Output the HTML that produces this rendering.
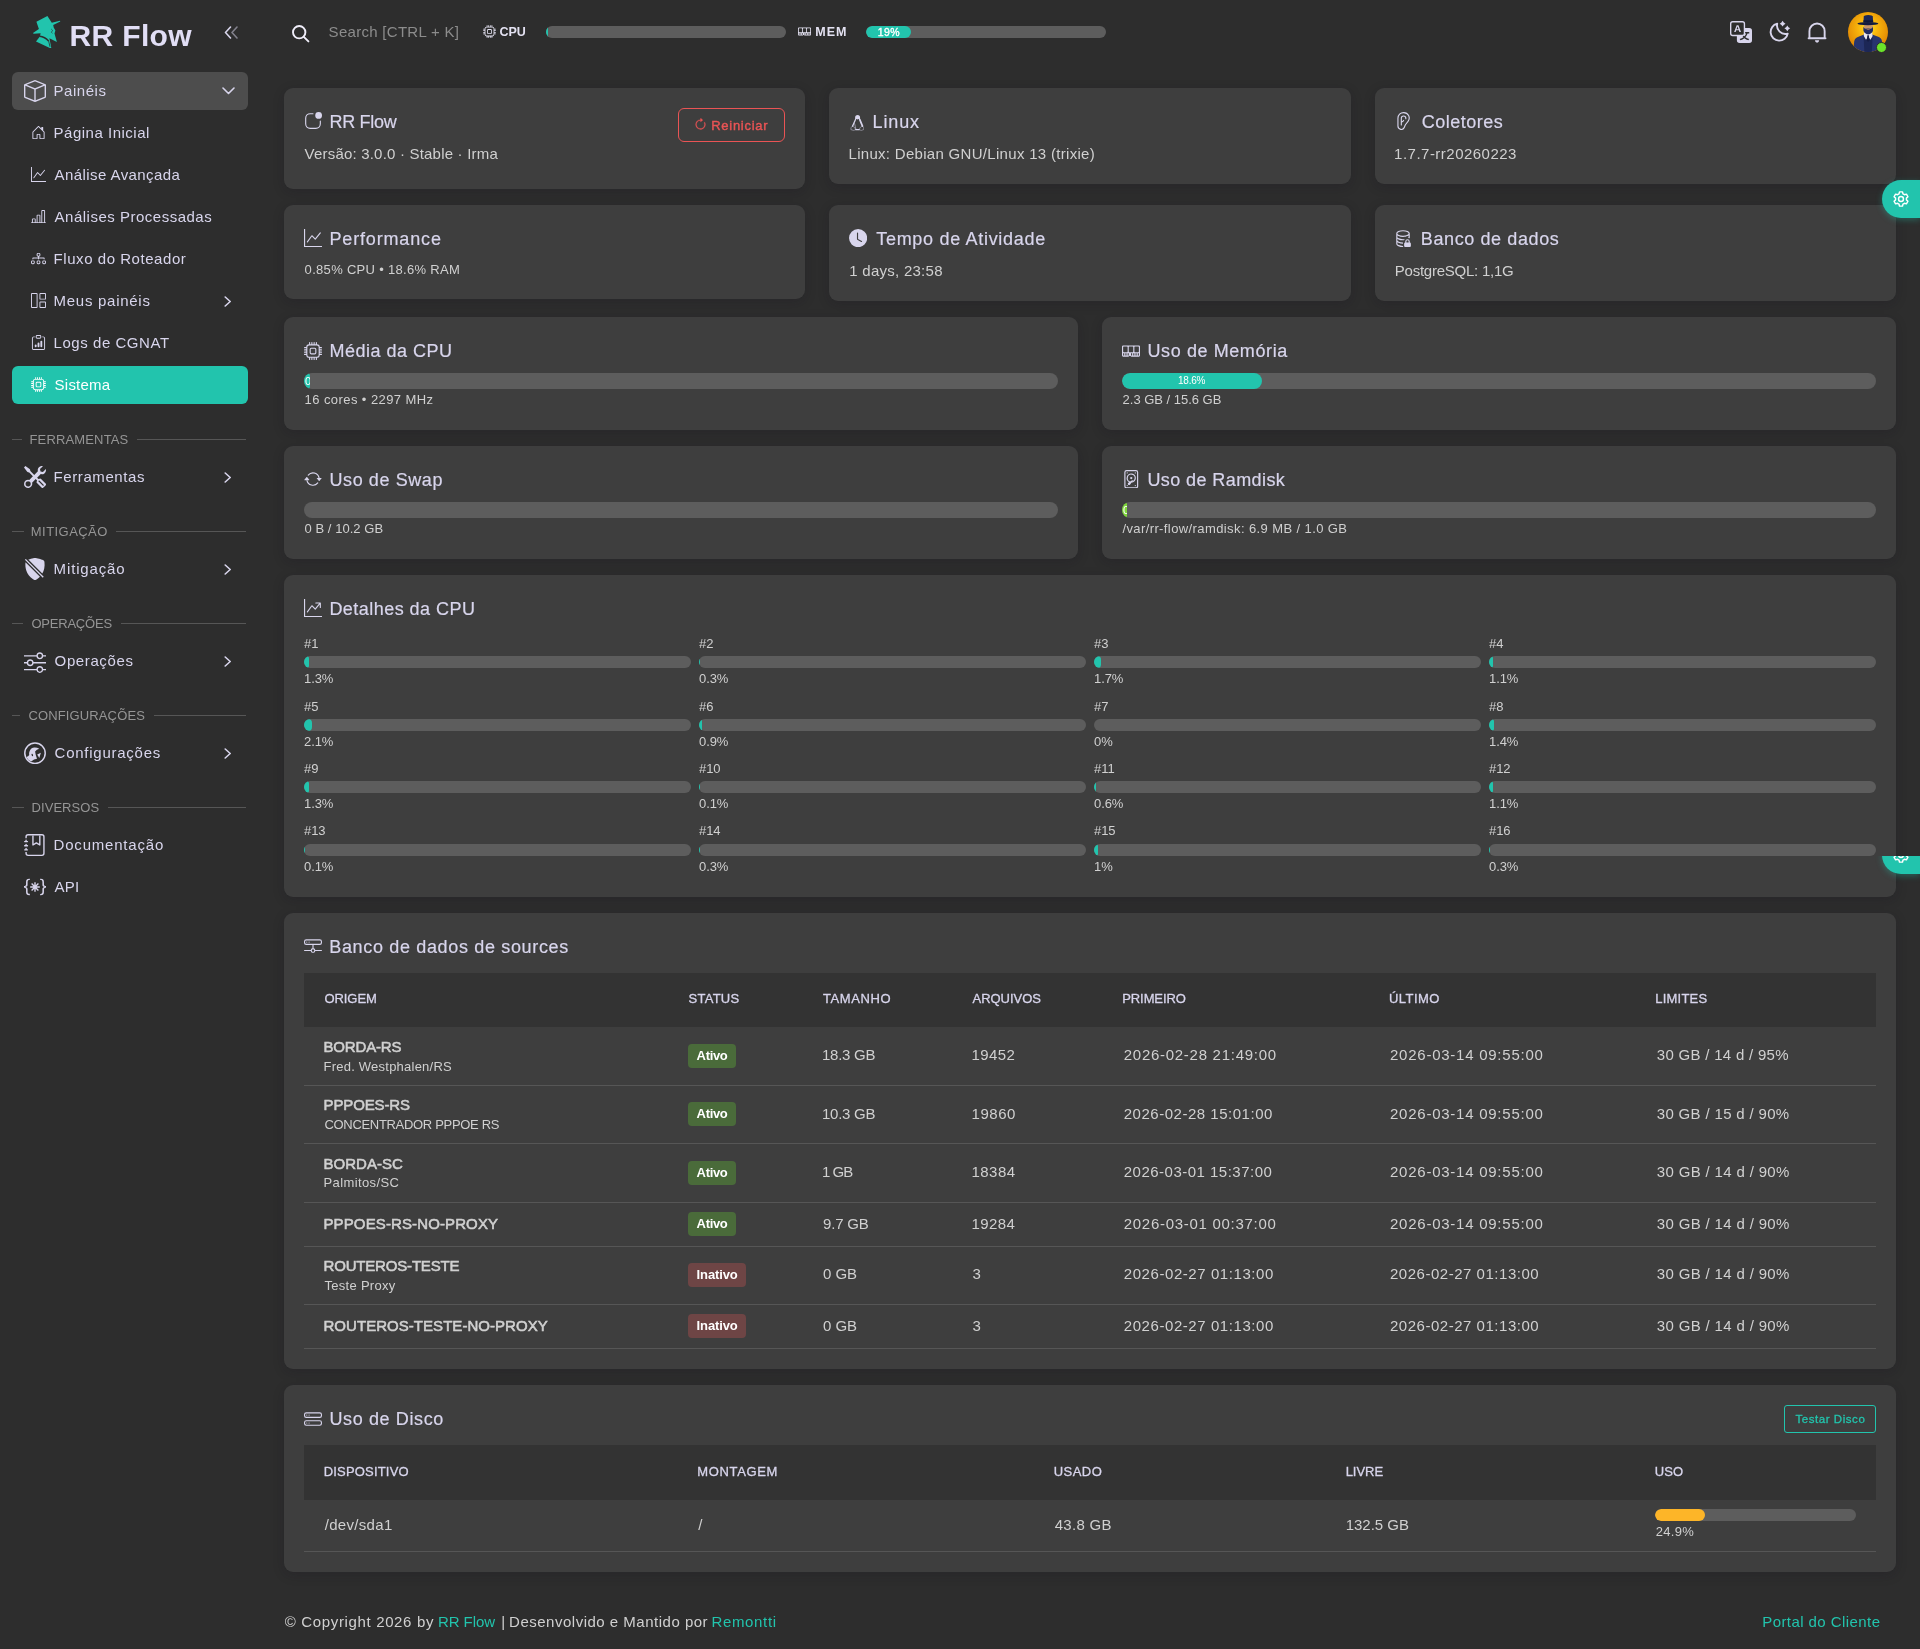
<!DOCTYPE html>
<html lang="pt-BR"><head><meta charset="utf-8"><title>RR Flow - Sistema</title><style>*{box-sizing:border-box}html,body{margin:0;padding:0}
body{width:1920px;height:1649px;background:#2d2d2d;font-family:"Liberation Sans",sans-serif;position:relative;overflow:hidden}
#root{position:absolute;left:0;top:0;width:1920px;height:1649px;will-change:transform}
.t{position:absolute;white-space:pre;line-height:1;display:block}
.b{position:absolute;display:block}
.card{position:absolute;background:#3e3e3e;border-radius:9px;box-shadow:0 3px 12px rgba(19,17,32,.2)}</style></head><body><div id="root">
<svg class="b" style="left:291px;top:24px;" width="19" height="19" viewBox="0 0 19 19" fill="none"><circle cx="8.2" cy="8.2" r="6.2" stroke="#f0eefa" stroke-width="1.9"></circle><path d="M12.8 12.8 L17.4 17.4" stroke="#f0eefa" stroke-width="1.9" stroke-linecap="round"></path></svg>
<span class="t" style="font-size: 15px; color: rgb(140, 140, 140); letter-spacing: 0.292px; left: 328.6px; top: 24.3px;">Search [CTRL + K]</span>
<svg class="b" style="left:482.5px;top:25.3px;" width="13" height="13" viewBox="0 0 16 16" fill="#e4e2f2"><path fill-rule="evenodd" clip-rule="evenodd" d="M5 0a.5.5 0 0 1 .5.5V2h1V.5a.5.5 0 0 1 1 0V2h1V.5a.5.5 0 0 1 1 0V2h1V.5a.5.5 0 0 1 1 0V2A2.5 2.5 0 0 1 14 4.5h1.5a.5.5 0 0 1 0 1H14v1h1.5a.5.5 0 0 1 0 1H14v1h1.5a.5.5 0 0 1 0 1H14v1h1.5a.5.5 0 0 1 0 1H14a2.5 2.5 0 0 1-2.5 2.5v1.5a.5.5 0 0 1-1 0V14h-1v1.5a.5.5 0 0 1-1 0V14h-1v1.5a.5.5 0 0 1-1 0V14h-1v1.5a.5.5 0 0 1-1 0V14A2.5 2.5 0 0 1 2 11.5H.5a.5.5 0 0 1 0-1H2v-1H.5a.5.5 0 0 1 0-1H2v-1H.5a.5.5 0 0 1 0-1H2v-1H.5a.5.5 0 0 1 0-1H2A2.5 2.5 0 0 1 4.5 2V.5A.5.5 0 0 1 5 0m-.5 3A1.5 1.5 0 0 0 3 4.5v7A1.5 1.5 0 0 0 4.5 13h7a1.5 1.5 0 0 0 1.5-1.5v-7A1.5 1.5 0 0 0 11.5 3zM5 6.5A1.5 1.5 0 0 1 6.5 5h3A1.5 1.5 0 0 1 11 6.5v3A1.5 1.5 0 0 1 9.5 11h-3A1.5 1.5 0 0 1 5 9.5zM6.5 6a.5.5 0 0 0-.5.5v3a.5.5 0 0 0 .5.5h3a.5.5 0 0 0 .5-.5v-3a.5.5 0 0 0-.5-.5z"></path></svg>
<span class="t" style="font-size: 12.5px; color: rgb(228, 226, 242); font-weight: 700; letter-spacing: -0.032px; left: 499.4px; top: 26.3px;">CPU</span>
<div class="b" style="left:546px;top:26px;width:240px;height:12px;background:#5d5d5d;border-radius:6.0px;overflow:hidden"><div style="width:2.04px;height:12px;background:#22c4ad;border-radius:6.0px"></div></div>
<svg class="b" style="left:798px;top:25.3px;" width="13" height="13" viewBox="0 0 16 16" fill="#e4e2f2"><path fill-rule="evenodd" clip-rule="evenodd" d="M1 3a1 1 0 0 0-1 1v8a1 1 0 0 0 1 1h4.586a1 1 0 0 0 .707-.293l.353-.353a.5.5 0 0 1 .708 0l.353.353a1 1 0 0 0 .707.293H15a1 1 0 0 0 1-1V4a1 1 0 0 0-1-1zm.5 1h3a.5.5 0 0 1 .5.5v4a.5.5 0 0 1-.5.5h-3a.5.5 0 0 1-.5-.5v-4a.5.5 0 0 1 .5-.5m5 0h3a.5.5 0 0 1 .5.5v4a.5.5 0 0 1-.5.5h-3a.5.5 0 0 1-.5-.5v-4a.5.5 0 0 1 .5-.5m4.5.5a.5.5 0 0 1 .5-.5h3a.5.5 0 0 1 .5.5v4a.5.5 0 0 1-.5.5h-3a.5.5 0 0 1-.5-.5zM2 10v2H1v-2zm2 0v2H3v-2zm2 0v2H5v-2zm3 0v2H8v-2zm2 0v2h-1v-2zm2 0v2h-1v-2zm2 0v2h-1v-2z"></path></svg>
<span class="t" style="font-size: 12.5px; color: rgb(228, 226, 242); font-weight: 700; letter-spacing: 0.925px; left: 815.3px; top: 26.3px;">MEM</span>
<div class="b" style="left:866px;top:26px;width:240px;height:12px;background:#5d5d5d;border-radius:6.0px;overflow:hidden"><div style="width:45.12px;height:12px;background:#22c4ad;border-radius:6.0px"></div></div>
<span class="t" style="font-size: 10.5px; color: rgb(255, 255, 255); -webkit-text-stroke: 0.35px rgb(255, 255, 255); letter-spacing: 0.41px; left: 877.65px; top: 26.8px;">19%</span>
<svg class="b" style="left:1730px;top:21px;" width="22" height="22" viewBox="0 0 16 16" fill="#d8d5ec"><path fill-rule="evenodd" clip-rule="evenodd" d="M4.545 6.714 4.11 8H3l1.862-5h1.284L8 8H6.833l-.435-1.286zm1.634-.736L5.500 3.956h-.049l-.679 2.022z"></path><path fill-rule="evenodd" clip-rule="evenodd" d="M0 2a2 2 0 0 1 2-2h7a2 2 0 0 1 2 2v3h3a2 2 0 0 1 2 2v7a2 2 0 0 1-2 2H7a2 2 0 0 1-2-2v-3H2a2 2 0 0 1-2-2zm2-1a1 1 0 0 0-1 1v7a1 1 0 0 0 1 1h7a1 1 0 0 0 1-1V2a1 1 0 0 0-1-1zm7.138 9.995q.289.451.630.846c-.748.575-1.673 1.001-2.768 1.292.178.217.451.635.555.867 1.125-.359 2.080-.844 2.886-1.494.777.665 1.739 1.165 2.930 1.472.133-.254.414-.673.629-.890-1.125-.253-2.057-.694-2.820-1.284.681-.747 1.222-1.651 1.621-2.757H14V8h-3v1.047h.765c-.318.844-.740 1.546-1.272 2.130a6 6 0 0 1-.415-.492 2 2 0 0 1-.940.310"></path></svg>
<svg class="b" style="left:1768px;top:20px;" width="24" height="24" viewBox="0 0 24 24" fill="none"><path d="M9.2 3.7 A8.6 8.6 0 1 0 19.7 13.6 A8.4 8.4 0 0 1 9.2 3.7 Z" stroke="#d8d5ec" stroke-width="1.9" stroke-linejoin="round"></path><path d="M14.6 0.8000000000000003 Q15.47 2.83 17.5 3.7 Q15.47 4.57 14.6 6.6 Q13.73 4.57 11.7 3.7 Q13.73 2.83 14.6 0.8000000000000003Z M19.3 5.4 Q20.17 7.43 22.2 8.3 Q20.17 9.17 19.3 11.200000000000001 Q18.43 9.17 16.400000000000002 8.3 Q18.43 7.43 19.3 5.4Z" fill="#d8d5ec"></path></svg>
<svg class="b" style="left:1806px;top:20px;" width="24" height="24" viewBox="0 0 24 24" fill="none"><path d="M2.6 18.2 H19.5 M3.45 18.2 V11.15 A7.6 7.6 0 0 1 18.65 11.15 V18.2" stroke="#d8d5ec" stroke-width="1.9" stroke-linecap="round"></path><path d="M8.9 20.3 H13.2 Q13 22.7 11.05 22.7 Q9.1 22.7 8.9 20.3Z" fill="#d8d5ec"></path></svg>
<svg class="b" style="left:1848px;top:12px;" width="40" height="40" viewBox="0 0 40 40" fill="none"><defs><radialGradient id="avg" cx="50%" cy="40%" r="55%"><stop offset="0" stop-color="#ffe326"></stop><stop offset="0.45" stop-color="#f8b40c"></stop><stop offset="1" stop-color="#e28a04"></stop></radialGradient><clipPath id="avc"><circle cx="20" cy="20" r="20"></circle></clipPath></defs>
<g clip-path="url(#avc)"><rect width="40" height="40" fill="url(#avg)"></rect>
<path d="M5.2 40 L6.2 29.5 Q6.8 26 10.5 24.8 L16.6 22.2 L20 24 L23.6 22.2 L30.2 24.8 Q33.6 26 34 29.5 L35 40 Z" fill="#27356f"></path>
<path d="M15.6 25.5 L16.4 40 L23.8 40 L24.6 25.5 Z" fill="#1c2756"></path>
<path d="M16 20.2 L24.2 20.2 L24.6 24 L22.4 27.8 L20.2 24.6 L18 27.8 L15.8 24 Z" fill="#e9e7ee"></path>
<path d="M19.3 23.2 L20.9 23.2 L21.4 28.6 L20.1 30 L18.8 28.6 Z" fill="#151d44"></path>
<rect x="16" y="11.4" width="8.8" height="6.2" rx="2.4" fill="#c99669"></rect>
<path d="M15.3 14.6 Q15.6 16.4 17.6 16.8 Q20.2 16 22.8 16.8 Q24.6 16.4 25 14.6 L25 18.4 Q24.2 21.6 20.2 22.4 Q16.2 21.6 15.4 18.4 Z" fill="#222e66"></path>
<path d="M18.2 17.2 Q20.2 16.6 22.2 17.2 Q20.2 18.4 18.2 17.2 Z" fill="#b4805a"></path>
<ellipse cx="19.9" cy="11.6" rx="10.5" ry="1.7" fill="#131b3e"></ellipse>
<path d="M15.4 10.6 L15.8 4.6 Q16 3.2 20.2 3.1 Q24.6 3.2 24.8 4.6 L25.2 10.6 Z" fill="#1d2859"></path>
<path d="M15.5 8.2 L25.1 8.2 L25.2 10.4 L15.4 10.4 Z" fill="#111839"></path>
</g></svg>
<div class="b" style="left:1875.5px;top:42.4px;width:11px;height:11px;border-radius:50%;background:#6be42a;border:1.4px solid #2d2d2d"></div>
<svg class="b" style="left:28px;top:12px;" width="40" height="40" viewBox="0 0 40 40" fill="none"><path d="M8.4 9.7 L19.4 4 L23.8 10.7 L32 8.7 L32.3 9.5 L25.2 13.1 L25.7 15.5 L27.4 18.4 L26.5 21.4 L28.9 30.1 L21.4 26.3 L23.3 35.9 L21.8 35.9 L8 29.4 L11.9 24.5 L12.6 21.2 L5.6 21.8 L5 20.9 L10.9 17 Z" fill="#22c4ad"></path><path d="M11.6 24.2 Q17 24.8 20.6 28.9" stroke="#2d2d2d" stroke-width="1.5" fill="none"></path><path d="M20.6 28.9 L22 34.8" stroke="#2d2d2d" stroke-width="0.8" fill="none"></path><path d="M23.2 17 L24.6 18.4 L23.4 20.2 L24.4 21.4" stroke="#2d2d2d" stroke-width="0.8" fill="none" opacity="0.8"></path></svg>
<span class="t" style="font-size: 30px; color: rgb(225, 222, 245); font-weight: 700; letter-spacing: 0.358px; left: 69.5px; top: 21px;">RR Flow</span>
<svg class="b" style="left:224px;top:26px;" width="15" height="13" viewBox="0 0 15 13" fill="none"><path d="M6.5 1 L1.5 6.5 L6.5 12" stroke="#d8d5ec" stroke-width="1.6" stroke-linecap="round" stroke-linejoin="round"></path><path d="M13 1 L8 6.5 L13 12" stroke="#d8d5ec" stroke-width="1.6" stroke-linecap="round" stroke-linejoin="round" opacity="0.5"></path></svg>
<div class="b" style="left:12px;top:72px;width:236px;height:38px;background:#4d4d4d;border-radius:6px;"></div>
<svg class="b" style="left:24px;top:80px;" width="22" height="22" viewBox="0 0 16 16" fill="#d8d5ec"><path fill-rule="evenodd" clip-rule="evenodd" d="M8.186 1.113a.5.5 0 0 0-.372 0L1.846 3.5 8 5.961 14.154 3.5zM15 4.239l-6.5 2.6v7.922l6.5-2.6V4.24zM7.5 14.762V6.838L1 4.239v7.923zM7.443.184a1.5 1.5 0 0 1 1.114 0l7.129 2.852A.5.5 0 0 1 16 3.5v8.662a1 1 0 0 1-.629.928l-7.185 2.874a.5.5 0 0 1-.372 0L.63 13.09a1 1 0 0 1-.63-.928V3.5a.5.5 0 0 1 .314-.464z"></path></svg>
<span class="t" style="font-size: 15px; color: rgb(216, 213, 236); letter-spacing: 0.517px; left: 53.6px; top: 83.1px;">Painéis</span>
<svg class="b" style="left:221.5px;top:87px;" width="13" height="8" viewBox="0 0 13 8" fill="none"><path d="M1 1 L6.5 6.5 L12 1" stroke="#d8d5ec" stroke-width="1.6" stroke-linecap="round" stroke-linejoin="round"></path></svg>
<span class="t" style="font-size: 15px; color: rgb(216, 213, 236); letter-spacing: 0.501px; left: 53.6px; top: 125px;">Página Inicial</span>
<span class="t" style="font-size: 15px; color: rgb(216, 213, 236); letter-spacing: 0.422px; left: 54.6px; top: 167px;">Análise Avançada</span>
<span class="t" style="font-size: 15px; color: rgb(216, 213, 236); letter-spacing: 0.501px; left: 54.6px; top: 208.8px;">Análises Processadas</span>
<span class="t" style="font-size: 15px; color: rgb(216, 213, 236); letter-spacing: 0.549px; left: 53.6px; top: 250.7px;">Fluxo do Roteador</span>
<span class="t" style="font-size: 15px; color: rgb(216, 213, 236); letter-spacing: 0.72px; left: 53.6px; top: 292.7px;">Meus painéis</span>
<span class="t" style="font-size: 15px; color: rgb(216, 213, 236); letter-spacing: 0.544px; left: 53.6px; top: 334.7px;">Logs de CGNAT</span>
<svg class="b" style="left:224px;top:295.5px;" width="8" height="11" viewBox="0 0 8 11" fill="none"><path d="M1.2 1 L6.2 5.5 L1.2 10" stroke="#d8d5ec" stroke-width="1.6" stroke-linecap="round" stroke-linejoin="round"></path></svg>
<div class="b" style="left:12px;top:366px;width:236px;height:38px;background:#22c4ad;border-radius:6px;"></div>
<span class="t" style="font-size: 15px; color: rgb(255, 255, 255); letter-spacing: 0.226px; left: 54.6px; top: 376.5px;">Sistema</span>
<svg class="b" style="left:31px;top:125px;" width="15" height="15" viewBox="0 0 16 16" fill="#d8d5ec"><path fill-rule="evenodd" clip-rule="evenodd" d="M8.354 1.146a.5.5 0 0 0-.708 0l-6 6A.5.5 0 0 0 1.500 7.500v7a.5.5 0 0 0 .5.5h4.500a.5.5 0 0 0 .5-.5v-4h2v4a.5.5 0 0 0 .5.5H14a.5.5 0 0 0 .5-.5v-7a.5.5 0 0 0-.146-.354L13 5.793V2.500a.5.5 0 0 0-.5-.5h-1a.5.5 0 0 0-.5.5v1.293zM2.500 14V7.707l5.500-5.500 5.500 5.500V14H10v-4a.5.5 0 0 0-.5-.5h-3a.5.5 0 0 0-.5.5v4z"></path></svg>
<svg class="b" style="left:31px;top:167px;" width="15" height="15" viewBox="0 0 16 16" fill="#d8d5ec"><path fill-rule="evenodd" clip-rule="evenodd" d="M0 0h1v15h15v1H0zm14.817 3.113a.5.5 0 0 1 .07.704l-4.5 5.5a.5.5 0 0 1-.74.037L7.06 6.767l-3.656 5.027a.5.5 0 0 1-.808-.588l4-5.5a.5.5 0 0 1 .758-.06l2.609 2.61 4.15-5.073a.5.5 0 0 1 .704-.07"></path></svg>
<svg class="b" style="left:31px;top:209px;" width="15" height="15" viewBox="0 0 16 16" fill="#d8d5ec"><path fill-rule="evenodd" clip-rule="evenodd" d="M11 2a1 1 0 0 1 1-1h2a1 1 0 0 1 1 1v12h.5a.5.5 0 0 1 0 1H.500a.5.5 0 0 1 0-1H1v-3a1 1 0 0 1 1-1h2a1 1 0 0 1 1 1v3h1V7a1 1 0 0 1 1-1h2a1 1 0 0 1 1 1v7h1zm1 12h2V2h-2zm-3 0V7H7v7zm-5 0v-3H2v3z"></path></svg>
<svg class="b" style="left:31px;top:251px;" width="15" height="15" viewBox="0 0 16 16" fill="#d8d5ec"><path fill-rule="evenodd" clip-rule="evenodd" d="M6 3.500A1.500 1.500 0 0 1 7.500 2h1A1.500 1.500 0 0 1 10 3.500v1A1.500 1.500 0 0 1 8.500 6v1H14a.5.5 0 0 1 .5.5v1a.5.5 0 0 1-1 0V8h-5v.5a.5.5 0 0 1-1 0V8h-5v.5a.5.5 0 0 1-1 0v-1A.5.5 0 0 1 2 7h5.500V6A1.500 1.500 0 0 1 6 4.500zM8.500 5a.5.5 0 0 0 .5-.5v-1a.5.5 0 0 0-.5-.5h-1a.5.5 0 0 0-.5.5v1a.5.5 0 0 0 .5.5zM0 11.500A1.500 1.500 0 0 1 1.500 10h1A1.500 1.500 0 0 1 4 11.500v1A1.500 1.500 0 0 1 2.500 14h-1A1.500 1.500 0 0 1 0 12.500zm1.500-.5a.5.5 0 0 0-.5.5v1a.5.5 0 0 0 .5.5h1a.5.5 0 0 0 .5-.5v-1a.5.5 0 0 0-.5-.5zm4.500.5A1.500 1.500 0 0 1 7.500 10h1a1.500 1.500 0 0 1 1.500 1.500v1A1.500 1.500 0 0 1 8.500 14h-1A1.500 1.500 0 0 1 6 12.500zm1.500-.5a.5.5 0 0 0-.5.5v1a.5.5 0 0 0 .5.5h1a.5.5 0 0 0 .5-.5v-1a.5.5 0 0 0-.5-.5zm4.500.5a1.500 1.500 0 0 1 1.500-1.500h1a1.500 1.500 0 0 1 1.500 1.500v1a1.500 1.500 0 0 1-1.500 1.500h-1a1.500 1.500 0 0 1-1.500-1.500zm1.500-.5a.5.5 0 0 0-.5.5v1a.5.5 0 0 0 .5.5h1a.5.5 0 0 0 .5-.5v-1a.5.5 0 0 0-.5-.5z"></path></svg>
<svg class="b" style="left:31px;top:293px;" width="15" height="15" viewBox="0 0 16 16" fill="#d8d5ec"><path fill-rule="evenodd" clip-rule="evenodd" d="M6 1H1v14h5zm9 0h-5v5h5zm0 9v5h-5v-5zM0 1a1 1 0 0 1 1-1h5a1 1 0 0 1 1 1v14a1 1 0 0 1-1 1H1a1 1 0 0 1-1-1zm9 0a1 1 0 0 1 1-1h5a1 1 0 0 1 1 1v5a1 1 0 0 1-1 1h-5a1 1 0 0 1-1-1zm1 8a1 1 0 0 0-1 1v5a1 1 0 0 0 1 1h5a1 1 0 0 0 1-1v-5a1 1 0 0 0-1-1z"></path></svg>
<svg class="b" style="left:31px;top:335px;" width="15" height="15" viewBox="0 0 16 16" fill="#d8d5ec"><path fill-rule="evenodd" clip-rule="evenodd" d="M4 11a1 1 0 1 1 2 0v1a1 1 0 1 1-2 0zm6-4a1 1 0 1 1 2 0v5a1 1 0 1 1-2 0zM7 9a1 1 0 0 1 2 0v3a1 1 0 1 1-2 0z"></path><path fill-rule="evenodd" clip-rule="evenodd" d="M4 1.500H3a2 2 0 0 0-2 2V14a2 2 0 0 0 2 2h10a2 2 0 0 0 2-2V3.500a2 2 0 0 0-2-2h-1v1h1a1 1 0 0 1 1 1V14a1 1 0 0 1-1 1H3a1 1 0 0 1-1-1V3.500a1 1 0 0 1 1-1h1z"></path><path fill-rule="evenodd" clip-rule="evenodd" d="M9.500 1a.5.5 0 0 1 .5.5v1a.5.5 0 0 1-.5.5h-3a.5.5 0 0 1-.5-.5v-1a.5.5 0 0 1 .5-.5zm-3-1A1.500 1.500 0 0 0 5 1.500v1A1.500 1.500 0 0 0 6.500 4h3A1.500 1.500 0 0 0 11 2.500v-1A1.500 1.500 0 0 0 9.500 0z"></path></svg>
<svg class="b" style="left:31px;top:377px;" width="15" height="15" viewBox="0 0 16 16" fill="#ffffff"><path fill-rule="evenodd" clip-rule="evenodd" d="M5 0a.5.5 0 0 1 .5.5V2h1V.5a.5.5 0 0 1 1 0V2h1V.5a.5.5 0 0 1 1 0V2h1V.5a.5.5 0 0 1 1 0V2A2.5 2.5 0 0 1 14 4.5h1.5a.5.5 0 0 1 0 1H14v1h1.5a.5.5 0 0 1 0 1H14v1h1.5a.5.5 0 0 1 0 1H14v1h1.5a.5.5 0 0 1 0 1H14a2.5 2.5 0 0 1-2.5 2.5v1.5a.5.5 0 0 1-1 0V14h-1v1.5a.5.5 0 0 1-1 0V14h-1v1.5a.5.5 0 0 1-1 0V14h-1v1.5a.5.5 0 0 1-1 0V14A2.5 2.5 0 0 1 2 11.5H.5a.5.5 0 0 1 0-1H2v-1H.5a.5.5 0 0 1 0-1H2v-1H.5a.5.5 0 0 1 0-1H2v-1H.5a.5.5 0 0 1 0-1H2A2.5 2.5 0 0 1 4.5 2V.5A.5.5 0 0 1 5 0m-.5 3A1.5 1.5 0 0 0 3 4.5v7A1.5 1.5 0 0 0 4.5 13h7a1.5 1.5 0 0 0 1.5-1.5v-7A1.5 1.5 0 0 0 11.5 3zM5 6.5A1.5 1.5 0 0 1 6.5 5h3A1.5 1.5 0 0 1 11 6.5v3A1.5 1.5 0 0 1 9.5 11h-3A1.5 1.5 0 0 1 5 9.5zM6.5 6a.5.5 0 0 0-.5.5v3a.5.5 0 0 0 .5.5h3a.5.5 0 0 0 .5-.5v-3a.5.5 0 0 0-.5-.5z"></path></svg>
<div class="b" style="left:12px;top:439.0px;width:10px;height:1px;background:#565656;border-radius:0px;"></div>
<div class="b" style="left:136.8px;top:439.0px;width:109.39999999999998px;height:1px;background:#565656;border-radius:0px;"></div>
<span class="t" style="font-size: 13px; color: rgb(149, 149, 149); letter-spacing: 0.151px; left: 29.5px; top: 433.2px;">FERRAMENTAS</span>
<div class="b" style="left:12px;top:531.0px;width:12px;height:1px;background:#565656;border-radius:0px;"></div>
<div class="b" style="left:116.2px;top:531.0px;width:130.0px;height:1px;background:#565656;border-radius:0px;"></div>
<span class="t" style="font-size: 13px; color: rgb(149, 149, 149); letter-spacing: 0.446px; left: 30.8px; top: 525.2px;">MITIGAÇÃO</span>
<div class="b" style="left:12px;top:623.0px;width:11px;height:1px;background:#565656;border-radius:0px;"></div>
<div class="b" style="left:121.2px;top:623.0px;width:124.99999999999999px;height:1px;background:#565656;border-radius:0px;"></div>
<span class="t" style="font-size: 13px; color: rgb(149, 149, 149); letter-spacing: -0.21px; left: 31.4px; top: 617.2px;">OPERAÇÕES</span>
<div class="b" style="left:12px;top:715.0px;width:8px;height:1px;background:#565656;border-radius:0px;"></div>
<div class="b" style="left:154.1px;top:715.0px;width:92.1px;height:1px;background:#565656;border-radius:0px;"></div>
<span class="t" style="font-size: 13px; color: rgb(149, 149, 149); letter-spacing: 0.136px; left: 28.4px; top: 709.2px;">CONFIGURAÇÕES</span>
<div class="b" style="left:12px;top:807.0px;width:12px;height:1px;background:#565656;border-radius:0px;"></div>
<div class="b" style="left:108.3px;top:807.0px;width:137.89999999999998px;height:1px;background:#565656;border-radius:0px;"></div>
<span class="t" style="font-size: 13px; color: rgb(149, 149, 149); letter-spacing: 0.07px; left: 31.5px; top: 801.2px;">DIVERSOS</span>
<span class="t" style="font-size: 15px; color: rgb(216, 213, 236); letter-spacing: 0.577px; left: 53.6px; top: 468.8px;">Ferramentas</span>
<span class="t" style="font-size: 15px; color: rgb(216, 213, 236); letter-spacing: 0.856px; left: 53.6px; top: 560.7px;">Mitigação</span>
<span class="t" style="font-size: 15px; color: rgb(216, 213, 236); letter-spacing: 0.616px; left: 54.6px; top: 652.8px;">Operações</span>
<span class="t" style="font-size: 15px; color: rgb(216, 213, 236); letter-spacing: 0.748px; left: 54.6px; top: 744.6px;">Configurações</span>
<span class="t" style="font-size: 15px; color: rgb(216, 213, 236); letter-spacing: 0.796px; left: 53.6px; top: 836.9px;">Documentação</span>
<span class="t" style="font-size: 15px; color: rgb(216, 213, 236); letter-spacing: 0.145px; left: 54.6px; top: 878.7px;">API</span>
<svg class="b" style="left:224px;top:471.5px;" width="8" height="11" viewBox="0 0 8 11" fill="none"><path d="M1.2 1 L6.2 5.5 L1.2 10" stroke="#d8d5ec" stroke-width="1.6" stroke-linecap="round" stroke-linejoin="round"></path></svg>
<svg class="b" style="left:224px;top:563.5px;" width="8" height="11" viewBox="0 0 8 11" fill="none"><path d="M1.2 1 L6.2 5.5 L1.2 10" stroke="#d8d5ec" stroke-width="1.6" stroke-linecap="round" stroke-linejoin="round"></path></svg>
<svg class="b" style="left:224px;top:655.5px;" width="8" height="11" viewBox="0 0 8 11" fill="none"><path d="M1.2 1 L6.2 5.5 L1.2 10" stroke="#d8d5ec" stroke-width="1.6" stroke-linecap="round" stroke-linejoin="round"></path></svg>
<svg class="b" style="left:224px;top:747.5px;" width="8" height="11" viewBox="0 0 8 11" fill="none"><path d="M1.2 1 L6.2 5.5 L1.2 10" stroke="#d8d5ec" stroke-width="1.6" stroke-linecap="round" stroke-linejoin="round"></path></svg>
<svg class="b" style="left:24px;top:466px;" width="22" height="22" viewBox="0 0 16 16" fill="#d8d5ec"><path fill-rule="evenodd" clip-rule="evenodd" d="M1 0 0 1l2.200 3.081a1 1 0 0 0 .815.419h.070a1 1 0 0 1 .708.293l2.675 2.675-2.617 2.654A3.003 3.003 0 0 0 0 13a3 3 0 1 0 5.878-.851l2.654-2.617.968.968-.305.914a1 1 0 0 0 .242 1.023l3.270 3.270a.997.997 0 0 0 1.414 0l1.586-1.586a.997.997 0 0 0 0-1.414l-3.270-3.270a1 1 0 0 0-1.023-.242L10.500 9.500l-.960-.960 2.680-2.643A3.005 3.005 0 0 0 16 3q0-.405-.102-.777l-2.140 2.141L12 4l-.364-1.757L13.777.102a3 3 0 0 0-3.675 3.680L7.462 6.460 4.793 3.793a1 1 0 0 1-.293-.707v-.071a1 1 0 0 0-.419-.814zm9.646 10.646a.5.5 0 0 1 .708 0l2.914 2.915a.5.5 0 0 1-.707.707l-2.915-2.914a.5.5 0 0 1 0-.708M3 11l.471.242.529.026.287.445.445.287.026.529L5 13l-.242.471-.026.529-.445.287-.287.445-.529.026L3 15l-.471-.242L2 14.732l-.287-.445L1.268 14l-.026-.529L1 13l.242-.471.026-.529.445-.287.287-.445.529-.026z"></path></svg>
<svg class="b" style="left:24px;top:558px;" width="22" height="22" viewBox="0 0 16 16" fill="#d8d5ec"><path fill-rule="evenodd" clip-rule="evenodd" d="M1.093 3.093c-.465 4.275.885 7.460 2.513 9.589a11.800 11.800 0 0 0 2.517 2.453c.386.273.744.482 1.048.625.280.132.581.240.829.240s.548-.108.829-.240a7 7 0 0 0 1.048-.625 11.300 11.300 0 0 0 1.733-1.525zm12.215 8.215L3.128 1.128A61 61 0 0 1 5.073.560C6.157.265 7.310 0 8 0s1.843.265 2.928.560c1.110.300 2.229.655 2.887.870a1.540 1.540 0 0 1 1.044 1.262c.483 3.626-.332 6.491-1.551 8.616m.338 3.046-13-13 .708-.708 13 13z"></path></svg>
<svg class="b" style="left:24px;top:650.5px;" width="22" height="22" viewBox="0 0 16 16" fill="#d8d5ec"><path fill-rule="evenodd" clip-rule="evenodd" d="M11.500 2a1.500 1.500 0 1 0 0 3 1.500 1.500 0 0 0 0-3M9.050 3a2.500 2.500 0 0 1 4.900 0H16v1h-2.050a2.500 2.500 0 0 1-4.900 0H0V3zM4.500 7a1.500 1.500 0 1 0 0 3 1.500 1.500 0 0 0 0-3M2.050 8a2.500 2.500 0 0 1 4.900 0H16v1H6.950a2.500 2.500 0 0 1-4.900 0H0V8zm9.450 4a1.500 1.500 0 1 0 0 3 1.500 1.500 0 0 0 0-3m-2.450 1a2.500 2.500 0 0 1 4.900 0H16v1h-2.050a2.500 2.500 0 0 1-4.900 0H0v-1z"></path></svg>
<svg class="b" style="left:24px;top:834px;" width="22" height="22" viewBox="0 0 16 16" fill="#d8d5ec"><path fill-rule="evenodd" clip-rule="evenodd" d="M6 8V1h1v6.117L8.743 6.070a.5.5 0 0 1 .514 0L11 7.117V1h1v7a.5.5 0 0 1-.757.429L9 7.083 6.757 8.430A.5.5 0 0 1 6 8"></path><path fill-rule="evenodd" clip-rule="evenodd" d="M3 0h10a2 2 0 0 1 2 2v12a2 2 0 0 1-2 2H3a2 2 0 0 1-2-2v-1h1v1a1 1 0 0 0 1 1h10a1 1 0 0 0 1-1V2a1 1 0 0 0-1-1H3a1 1 0 0 0-1 1v1H1V2a2 2 0 0 1 2-2"></path><path fill-rule="evenodd" clip-rule="evenodd" d="M1 5v-.5a.5.5 0 0 1 1 0V5h.5a.5.5 0 0 1 0 1h-2a.5.5 0 0 1 0-1zm0 3v-.5a.5.5 0 0 1 1 0V8h.5a.5.5 0 0 1 0 1h-2a.5.5 0 0 1 0-1zm0 3v-.5a.5.5 0 0 1 1 0v.5h.5a.5.5 0 0 1 0 1h-2a.5.5 0 0 1 0-1z"></path></svg>
<svg class="b" style="left:24px;top:876px;" width="22" height="22" viewBox="0 0 16 16" fill="#d8d5ec"><path fill-rule="evenodd" clip-rule="evenodd" d="M1.114 8.063V7.900c1.005-.102 1.497-.615 1.497-1.600V4.503c0-1.094.390-1.538 1.354-1.538h.273V2h-.376C2.250 2 1.490 2.759 1.490 4.352v1.524c0 1.094-.376 1.456-1.490 1.456v1.299c1.114 0 1.490.362 1.490 1.456v1.524c0 1.593.760 2.352 2.372 2.352h.376v-.964h-.273c-.964 0-1.354-.444-1.354-1.538V9.663c0-.984-.492-1.497-1.497-1.600M14.886 7.900v.164c-1.005.103-1.497.616-1.497 1.600v1.798c0 1.094-.390 1.538-1.354 1.538h-.273v.964h.376c1.613 0 2.372-.759 2.372-2.352v-1.524c0-1.094.376-1.456 1.490-1.456v-1.300c-1.114 0-1.490-.362-1.490-1.456V4.352C14.510 2.759 13.750 2 12.138 2h-.376v.964h.273c.964 0 1.354.444 1.354 1.538V6.300c0 .984.492 1.497 1.497 1.600M7.500 11.500V9.207l-1.621 1.621-.707-.707L6.792 8.500H4.500v-1h2.293L5.172 5.879l.707-.707L7.500 6.792V4.500h1v2.293l1.621-1.621.707.707L9.208 7.500H11.500v1H9.207l1.621 1.621-.707.707L8.500 9.208V11.500z"></path></svg>
<svg class="b" style="left:24px;top:741.6px;" width="22" height="22.5" viewBox="0 0 22 22.5" fill="none"><circle cx="11" cy="11.25" r="10.2" stroke="#d8d5ec" stroke-width="1.5"></circle><path d="M10.5 5.4 Q13 5.3 15.3 6.8 Q12.6 7.6 11.1 9.5 Q11.6 13.4 13 16.7 Q10 16.9 7.2 19.4 Q3.6 18 2.3 15.1 Q4.4 14.4 5.2 13 Q4.8 11 5.6 9.3 Q6.2 7.6 7.4 6.6 Q8.8 5.5 10.5 5.4Z M13.2 12.4 L16.9 10.7 L15.3 15.9 Z" fill="#d8d5ec"></path><ellipse cx="8.3" cy="13" rx="0.7" ry="1.3" transform="rotate(-20 8.3 13)" fill="#2d2d2d"></ellipse></svg>
<div class="card" style="left:284px;top:88px;width:521px;height:100.5px"></div>
<svg class="b" style="left:303.5px;top:111.75px;" width="18" height="18" viewBox="0 0 16 16" fill="#d8d5ec"><path fill-rule="evenodd" clip-rule="evenodd" d="M5.5 2A3.5 3.5 0 0 0 2 5.5v5A3.5 3.5 0 0 0 5.5 14h5a3.5 3.5 0 0 0 3.5-3.5V8a.5.5 0 0 1 1 0v2.5a4.5 4.5 0 0 1-4.5 4.5h-5A4.5 4.5 0 0 1 1 10.5v-5A4.5 4.5 0 0 1 5.5 1H8a.5.5 0 0 1 0 1z"></path><path fill-rule="evenodd" clip-rule="evenodd" d="M16 3a3 3 0 1 1-6 0 3 3 0 0 1 6 0"></path></svg>
<span class="t" style="font-size: 18px; color: rgb(216, 213, 236); -webkit-text-stroke: 0.2px rgb(216, 213, 236); letter-spacing: -0.292px; left: 329.5px; top: 112.75px;">RR Flow</span>
<span class="t" style="font-size: 15px; color: rgb(208, 208, 208); letter-spacing: 0.198px; left: 304.6px; top: 146px;">Versão: 3.0.0 · Stable · Irma</span>
<div class="b" style="left:678px;top:108px;width:107px;height:34px;border:1px solid #ea5455;border-radius:6px"></div>
<svg class="b" style="left:694.4px;top:118px;stroke:#ea5455;stroke-width:0.35px;" width="13" height="13" viewBox="0 0 16 16" fill="#ea5455"><path fill-rule="evenodd" clip-rule="evenodd" d="M8 3a5 5 0 1 0 4.546 2.914.5.5 0 0 1 .908-.417A6 6 0 1 1 8 2z"></path><path fill-rule="evenodd" clip-rule="evenodd" d="M8 4.466V.534a.25.25 0 0 1 .41-.192l2.36 1.966c.12.1.12.284 0 .384L8.41 4.658A.25.25 0 0 1 8 4.466"></path></svg>
<span class="t" style="font-size: 13px; color: rgb(234, 84, 85); -webkit-text-stroke: 0.4px rgb(234, 84, 85); letter-spacing: 0.72px; left: 711.25px; top: 118.7px;">Reiniciar</span>
<div class="card" style="left:829px;top:88px;width:522px;height:96.4px"></div>
<svg class="b" style="left:850px;top:115px;" width="14.4" height="16.2" viewBox="-0.2 0 14.4 16.2" fill="none"><path d="M4.9 5 V2.7 Q4.9 0.1 7.4 0.1 Q9.9 0.1 9.9 2.7 V5 Q8.6 3.2 7.4 4.4 Q6.2 3.2 4.9 5Z" fill="#d8d5ec"></path><path d="M5.3 4.6 L2.3 11.2" stroke="#d8d5ec" stroke-linecap="round" stroke-linejoin="round" fill="none" stroke-width="1.3"></path><path d="M9.6 4.6 L12.3 11.2" stroke="#d8d5ec" stroke-linecap="round" stroke-linejoin="round" fill="none" stroke-width="1.7"></path><path d="M2.3 11 Q-0.1 13 0.7 14.6 Q3.4 16.2 5.6 14.7 Q5 12.2 2.3 11Z" stroke="#d8d5ec" stroke-linecap="round" stroke-linejoin="round" fill="none" stroke-width="0.9" opacity="0.5"></path><path d="M12.1 11 Q14.3 13 13.5 14.6 Q11 16.2 8.9 14.7 Q9.4 12.2 12.1 11Z" stroke="#d8d5ec" stroke-linecap="round" stroke-linejoin="round" fill="none" stroke-width="0.9" opacity="0.5"></path><path d="M5.6 14.6 H8.9" stroke="#d8d5ec" stroke-linecap="round" stroke-linejoin="round" fill="none" stroke-width="1.3"></path><path d="M4.4 8.6 Q5.3 12 5.7 14.2" stroke="#d8d5ec" stroke-linecap="round" stroke-linejoin="round" fill="none" stroke-width="0.9" opacity="0.6"></path></svg>
<span class="t" style="font-size: 18px; color: rgb(216, 213, 236); -webkit-text-stroke: 0.2px rgb(216, 213, 236); letter-spacing: 0.842px; left: 872.6px; top: 112.75px;">Linux</span>
<span class="t" style="font-size: 15px; color: rgb(208, 208, 208); letter-spacing: 0.302px; left: 848.5px; top: 146px;">Linux: Debian GNU/Linux 13 (trixie)</span>
<div class="card" style="left:1375px;top:88px;width:521px;height:96.4px"></div>
<svg class="b" style="left:1394.4px;top:112px;" width="18" height="18" viewBox="0 0 16 16" fill="#d8d5ec"><path fill-rule="evenodd" clip-rule="evenodd" d="M8.5 1A4.5 4.5 0 0 0 4 5.5v7.047a2.453 2.453 0 0 0 4.750.861l.512-1.363a5.600 5.600 0 0 1 .816-1.460l2.008-2.581A4.340 4.340 0 0 0 8.660 1zM3 5.500A5.500 5.500 0 0 1 8.500 0h.160a5.340 5.340 0 0 1 4.215 8.618l-2.008 2.581a4.600 4.600 0 0 0-.670 1.197l-.510 1.363A3.453 3.453 0 0 1 3 12.547zM8.500 4A1.500 1.500 0 0 0 7 5.500v2.695q.168-.09.332-.192c.327-.208.577-.440.720-.727a.5.5 0 1 1 .895.448c-.256.513-.673.865-1.079 1.123A9 9 0 0 1 7 9.313V11.500a.5.5 0 0 1-1 0v-6a2.500 2.500 0 0 1 5 0V6a.5.5 0 0 1-1 0v-.5A1.500 1.500 0 0 0 8.500 4"></path></svg>
<span class="t" style="font-size: 18px; color: rgb(216, 213, 236); -webkit-text-stroke: 0.2px rgb(216, 213, 236); letter-spacing: 0.495px; left: 1421.8px; top: 112.75px;">Coletores</span>
<span class="t" style="font-size: 15px; color: rgb(208, 208, 208); letter-spacing: 0.484px; left: 1394.1px; top: 146px;">1.7.7-rr20260223</span>
<div class="card" style="left:284px;top:205px;width:521px;height:93.75px"></div>
<svg class="b" style="left:304px;top:229px;" width="18" height="18" viewBox="0 0 16 16" fill="#d8d5ec"><path fill-rule="evenodd" clip-rule="evenodd" d="M0 0h1v15h15v1H0zm14.817 3.113a.5.5 0 0 1 .07.704l-4.5 5.5a.5.5 0 0 1-.74.037L7.06 6.767l-3.656 5.027a.5.5 0 0 1-.808-.588l4-5.5a.5.5 0 0 1 .758-.06l2.609 2.61 4.15-5.073a.5.5 0 0 1 .704-.07"></path></svg>
<span class="t" style="font-size: 18px; color: rgb(216, 213, 236); -webkit-text-stroke: 0.2px rgb(216, 213, 236); letter-spacing: 0.837px; left: 329.5px; top: 229.75px;">Performance</span>
<span class="t" style="font-size: 13px; color: rgb(208, 208, 208); letter-spacing: 0.309px; left: 304.6px; top: 262.75px;">0.85% CPU • 18.6% RAM</span>
<div class="card" style="left:829px;top:205px;width:522px;height:95.6px"></div>
<svg class="b" style="left:849px;top:228.9px;" width="18.2" height="18.2" viewBox="0 0 16 16" fill="#d8d5ec"><path fill-rule="evenodd" clip-rule="evenodd" d="M16 8A8 8 0 1 1 0 8a8 8 0 0 1 16 0M8 3.5a.5.5 0 0 0-1 0V9a.5.5 0 0 0 .252.434l3.5 2a.5.5 0 0 0 .496-.868L8 8.71z"></path></svg>
<span class="t" style="font-size: 18px; color: rgb(216, 213, 236); -webkit-text-stroke: 0.2px rgb(216, 213, 236); letter-spacing: 0.695px; left: 876.25px; top: 229.75px;">Tempo de Atividade</span>
<span class="t" style="font-size: 15px; color: rgb(208, 208, 208); letter-spacing: 0.265px; left: 849.25px; top: 263px;">1 days, 23:58</span>
<div class="card" style="left:1375px;top:205px;width:521px;height:95.6px"></div>
<svg class="b" style="left:1394.45px;top:229px;" width="18" height="18" viewBox="0 0 16 16" fill="#d8d5ec"><path fill-rule="evenodd" clip-rule="evenodd" d="M13 5.698a5 5 0 0 1-.904.525C11.022 6.711 9.573 7 8 7s-3.022-.289-4.096-.777A5 5 0 0 1 3 5.698V7c0 .374.356.875 1.318 1.313C5.234 8.729 6.536 9 8 9c.666 0 1.298-.056 1.876-.156-.43.31-.804.693-1.102 1.132A12 12 0 0 1 8 10c-1.573 0-3.022-.289-4.096-.777A5 5 0 0 1 3 8.698V10c0 .374.356.875 1.318 1.313C5.234 11.729 6.536 12 8 12h.027a4.600 4.600 0 0 0-.017.800A2 2 0 0 0 8 13c-1.573 0-3.022-.289-4.096-.777A5 5 0 0 1 3 11.698V13c0 .374.356.875 1.318 1.313C5.234 14.729 6.536 15 8 15c0 .363.097.704.266.997Q8.134 16.001 8 16c-1.573 0-3.022-.289-4.096-.777C2.875 14.755 2 14.007 2 13V4c0-1.007.875-1.755 1.904-2.223C4.978 1.289 6.427 1 8 1s3.022.289 4.096.777C13.125 2.245 14 2.993 14 4v4.256a4.500 4.500 0 0 0-1.753-.249C12.787 7.654 13 7.289 13 7zm-8.682-3.010C3.356 3.124 3 3.625 3 4c0 .374.356.875 1.318 1.313C5.234 5.729 6.536 6 8 6s2.766-.270 3.682-.687C12.644 4.875 13 4.373 13 4c0-.374-.356-.875-1.318-1.313C10.766 2.271 9.464 2 8 2s-2.766.270-3.682.687Z"></path><path fill-rule="evenodd" clip-rule="evenodd" d="M9 13a1 1 0 0 1 1-1v-1a2 2 0 1 1 4 0v1a1 1 0 0 1 1 1v2a1 1 0 0 1-1 1h-4a1 1 0 0 1-1-1zm3-3a1 1 0 0 0-1 1v1h2v-1a1 1 0 0 0-1-1"></path></svg>
<span class="t" style="font-size: 18px; color: rgb(216, 213, 236); -webkit-text-stroke: 0.2px rgb(216, 213, 236); letter-spacing: 0.607px; left: 1420.8px; top: 229.75px;">Banco de dados</span>
<span class="t" style="font-size: 15px; color: rgb(208, 208, 208); letter-spacing: -0.246px; left: 1394.8px; top: 262.8px;">PostgreSQL: 1,1G</span>
<div class="card" style="left:284px;top:317px;width:794px;height:113px"></div>
<svg class="b" style="left:304px;top:341.9px;" width="18" height="18" viewBox="0 0 16 16" fill="#d8d5ec"><path fill-rule="evenodd" clip-rule="evenodd" d="M5 0a.5.5 0 0 1 .5.5V2h1V.5a.5.5 0 0 1 1 0V2h1V.5a.5.5 0 0 1 1 0V2h1V.5a.5.5 0 0 1 1 0V2A2.5 2.5 0 0 1 14 4.5h1.5a.5.5 0 0 1 0 1H14v1h1.5a.5.5 0 0 1 0 1H14v1h1.5a.5.5 0 0 1 0 1H14v1h1.5a.5.5 0 0 1 0 1H14a2.5 2.5 0 0 1-2.5 2.5v1.5a.5.5 0 0 1-1 0V14h-1v1.5a.5.5 0 0 1-1 0V14h-1v1.5a.5.5 0 0 1-1 0V14h-1v1.5a.5.5 0 0 1-1 0V14A2.5 2.5 0 0 1 2 11.5H.5a.5.5 0 0 1 0-1H2v-1H.5a.5.5 0 0 1 0-1H2v-1H.5a.5.5 0 0 1 0-1H2v-1H.5a.5.5 0 0 1 0-1H2A2.5 2.5 0 0 1 4.5 2V.5A.5.5 0 0 1 5 0m-.5 3A1.5 1.5 0 0 0 3 4.5v7A1.5 1.5 0 0 0 4.5 13h7a1.5 1.5 0 0 0 1.5-1.5v-7A1.5 1.5 0 0 0 11.5 3zM5 6.5A1.5 1.5 0 0 1 6.5 5h3A1.5 1.5 0 0 1 11 6.5v3A1.5 1.5 0 0 1 9.5 11h-3A1.5 1.5 0 0 1 5 9.5zM6.5 6a.5.5 0 0 0-.5.5v3a.5.5 0 0 0 .5.5h3a.5.5 0 0 0 .5-.5v-3a.5.5 0 0 0-.5-.5z"></path></svg>
<span class="t" style="font-size: 18px; color: rgb(216, 213, 236); -webkit-text-stroke: 0.2px rgb(216, 213, 236); letter-spacing: 0.504px; left: 329.5px; top: 341.75px;">Média da CPU</span>
<div class="b" style="left:304px;top:373.25px;width:754px;height:16px;background:#5d5d5d;border-radius:8px;overflow:hidden"><div style="width:6.4px;height:16px;background:#22c4ad;border-radius:8px;color:#fff;font-size:11px;line-height:16px;text-indent:1px;overflow:hidden">0</div></div>
<span class="t" style="font-size: 13px; color: rgb(208, 208, 208); letter-spacing: 0.423px; left: 304.6px; top: 393.1px;">16 cores • 2297 MHz</span>
<div class="card" style="left:1102px;top:317px;width:794px;height:113px"></div>
<svg class="b" style="left:1122px;top:341.9px;" width="18" height="18" viewBox="0 0 16 16" fill="#d8d5ec"><path fill-rule="evenodd" clip-rule="evenodd" d="M1 3a1 1 0 0 0-1 1v8a1 1 0 0 0 1 1h4.586a1 1 0 0 0 .707-.293l.353-.353a.5.5 0 0 1 .708 0l.353.353a1 1 0 0 0 .707.293H15a1 1 0 0 0 1-1V4a1 1 0 0 0-1-1zm.5 1h3a.5.5 0 0 1 .5.5v4a.5.5 0 0 1-.5.5h-3a.5.5 0 0 1-.5-.5v-4a.5.5 0 0 1 .5-.5m5 0h3a.5.5 0 0 1 .5.5v4a.5.5 0 0 1-.5.5h-3a.5.5 0 0 1-.5-.5v-4a.5.5 0 0 1 .5-.5m4.5.5a.5.5 0 0 1 .5-.5h3a.5.5 0 0 1 .5.5v4a.5.5 0 0 1-.5.5h-3a.5.5 0 0 1-.5-.5zM2 10v2H1v-2zm2 0v2H3v-2zm2 0v2H5v-2zm3 0v2H8v-2zm2 0v2h-1v-2zm2 0v2h-1v-2zm2 0v2h-1v-2z"></path></svg>
<span class="t" style="font-size: 18px; color: rgb(216, 213, 236); -webkit-text-stroke: 0.2px rgb(216, 213, 236); letter-spacing: 0.593px; left: 1147.5px; top: 341.75px;">Uso de Memória</span>
<div class="b" style="left:1122px;top:373.25px;width:754px;height:16px;background:#5d5d5d;border-radius:8.0px;overflow:hidden"><div style="width:140.24px;height:16px;background:#22c4ad;border-radius:8.0px"></div></div>
<span class="t" style="font-size: 10px; color: rgb(255, 255, 255); letter-spacing: -0.241px; left: 1178.05px; top: 376.1px;">18.6%</span>
<span class="t" style="font-size: 13px; color: rgb(208, 208, 208); letter-spacing: -0.015px; left: 1122.6px; top: 393.1px;">2.3 GB / 15.6 GB</span>
<div class="card" style="left:284px;top:446px;width:794px;height:113px"></div>
<svg class="b" style="left:304px;top:469.9px;" width="18" height="18" viewBox="0 0 16 16" fill="#d8d5ec"><path fill-rule="evenodd" clip-rule="evenodd" d="M11.534 7h3.932a.25.25 0 0 1 .192.41l-1.966 2.36a.25.25 0 0 1-.384 0l-1.966-2.36a.25.25 0 0 1 .192-.41m-11 2h3.932a.25.25 0 0 0 .192-.41L2.692 6.23a.25.25 0 0 0-.384 0L.342 8.59A.25.25 0 0 0 .534 9"></path><path fill-rule="evenodd" clip-rule="evenodd" d="M8 3c-1.552 0-2.94.707-3.857 1.818a.5.5 0 1 1-.771-.636A6.002 6.002 0 0 1 13.917 7H12.9A5 5 0 0 0 8 3M3.1 9a5.002 5.002 0 0 0 8.757 2.182.5.5 0 1 1 .771.636A6.002 6.002 0 0 1 2.083 9z"></path></svg>
<span class="t" style="font-size: 18px; color: rgb(216, 213, 236); -webkit-text-stroke: 0.2px rgb(216, 213, 236); letter-spacing: 0.585px; left: 329.5px; top: 470.75px;">Uso de Swap</span>
<div class="b" style="left:304px;top:502.25px;width:754px;height:16px;background:#5d5d5d;border-radius:8.0px;overflow:hidden"><div style="width:0.00px;height:16px;background:#22c4ad;border-radius:8.0px"></div></div>
<span class="t" style="font-size: 13px; color: rgb(208, 208, 208); letter-spacing: 0.036px; left: 304.6px; top: 522.1px;">0 B / 10.2 GB</span>
<div class="card" style="left:1102px;top:446px;width:794px;height:113px"></div>
<svg class="b" style="left:1121.7px;top:469.8px;" width="18.5" height="18.5" viewBox="0 0 16 16" fill="#d8d5ec"><path fill-rule="evenodd" clip-rule="evenodd" d="M12 2.5a.5.5 0 1 1-1 0 .5.5 0 0 1 1 0m0 11a.5.5 0 1 1-1 0 .5.5 0 0 1 1 0m-7.500.5a.5.5 0 1 0 0-1 .5.5 0 0 0 0 1M5 2.500a.5.5 0 1 1-1 0 .5.5 0 0 1 1 0M8 8a1 1 0 1 0 0-2 1 1 0 0 0 0 2"></path><path fill-rule="evenodd" clip-rule="evenodd" d="M12 7a4 4 0 0 1-3.937 4c-.537.813-1.020 1.515-1.181 1.677a1.102 1.102 0 0 1-1.560-1.559c.1-.098.396-.314.795-.588A4 4 0 0 1 8 3a4 4 0 0 1 4 4m-1 0a3 3 0 1 0-3.891 2.865c.667-.44 1.396-.91 1.955-1.268.224-.144.483.115.340.340l-.620.960A3 3 0 0 0 11 7"></path><path fill-rule="evenodd" clip-rule="evenodd" d="M2 2a2 2 0 0 1 2-2h8a2 2 0 0 1 2 2v12a2 2 0 0 1-2 2H4a2 2 0 0 1-2-2zm2-1a1 1 0 0 0-1 1v12a1 1 0 0 0 1 1h8a1 1 0 0 0 1-1V2a1 1 0 0 0-1-1z"></path></svg>
<span class="t" style="font-size: 18px; color: rgb(216, 213, 236); -webkit-text-stroke: 0.2px rgb(216, 213, 236); letter-spacing: 0.412px; left: 1147.4px; top: 470.75px;">Uso de Ramdisk</span>
<div class="b" style="left:1122px;top:502.25px;width:754px;height:16px;background:#5d5d5d;border-radius:8px;overflow:hidden"><div style="width:5.2px;height:16px;background:#7ed63a;border-radius:8px;color:#fff;font-size:11px;line-height:16px;text-indent:1px;overflow:hidden">0</div></div>
<span class="t" style="font-size: 13px; color: rgb(208, 208, 208); letter-spacing: 0.399px; left: 1122.4px; top: 522.1px;">/var/rr-flow/ramdisk: 6.9 MB / 1.0 GB</span>
<div class="card" style="left:284px;top:575px;width:1612px;height:322px"></div>
<svg class="b" style="left:304px;top:599.2px;" width="18" height="18" viewBox="0 0 16 16" fill="#d8d5ec"><path fill-rule="evenodd" clip-rule="evenodd" d="M0 0h1v15h15v1H0zm10 3.5a.5.5 0 0 1 .5-.5h4a.5.5 0 0 1 .5.5v4a.5.5 0 0 1-1 0V4.9l-3.613 4.417a.5.5 0 0 1-.74.037L7.06 6.767l-3.656 5.027a.5.5 0 0 1-.808-.588l4-5.5a.5.5 0 0 1 .758-.06l2.609 2.61L13.445 4H10.5a.5.5 0 0 1-.5-.5"></path></svg>
<span class="t" style="font-size: 18px; color: rgb(216, 213, 236); -webkit-text-stroke: 0.2px rgb(216, 213, 236); letter-spacing: 0.459px; left: 329.4px; top: 599.75px;">Detalhes da CPU</span>
<span class="t" style="font-size: 13px; color: rgb(208, 208, 208); letter-spacing: -0.1px; left: 304.1px; top: 637.3px;">#1</span>
<div class="b" style="left:304px;top:656px;width:387px;height:12px;background:#5d5d5d;border-radius:6.0px;overflow:hidden"><div style="width:5.03px;height:12px;background:#22c4ad;border-radius:6.0px"></div></div>
<span class="t" style="font-size: 13px; color: rgb(208, 208, 208); letter-spacing: -0.1px; left: 304.1px; top: 672.3px;">1.3%</span>
<span class="t" style="font-size: 13px; color: rgb(208, 208, 208); letter-spacing: -0.1px; left: 699.1px; top: 637.3px;">#2</span>
<div class="b" style="left:699px;top:656px;width:387px;height:12px;background:#5d5d5d;border-radius:6.0px;overflow:hidden"><div style="width:1.16px;height:12px;background:#22c4ad;border-radius:6.0px"></div></div>
<span class="t" style="font-size: 13px; color: rgb(208, 208, 208); letter-spacing: -0.1px; left: 699.1px; top: 672.3px;">0.3%</span>
<span class="t" style="font-size: 13px; color: rgb(208, 208, 208); letter-spacing: -0.1px; left: 1094.1px; top: 637.3px;">#3</span>
<div class="b" style="left:1094px;top:656px;width:387px;height:12px;background:#5d5d5d;border-radius:6.0px;overflow:hidden"><div style="width:6.58px;height:12px;background:#22c4ad;border-radius:6.0px"></div></div>
<span class="t" style="font-size: 13px; color: rgb(208, 208, 208); letter-spacing: -0.1px; left: 1094.1px; top: 672.3px;">1.7%</span>
<span class="t" style="font-size: 13px; color: rgb(208, 208, 208); letter-spacing: -0.1px; left: 1489.1px; top: 637.3px;">#4</span>
<div class="b" style="left:1489px;top:656px;width:387px;height:12px;background:#5d5d5d;border-radius:6.0px;overflow:hidden"><div style="width:4.26px;height:12px;background:#22c4ad;border-radius:6.0px"></div></div>
<span class="t" style="font-size: 13px; color: rgb(208, 208, 208); letter-spacing: -0.1px; left: 1489.1px; top: 672.3px;">1.1%</span>
<span class="t" style="font-size: 13px; color: rgb(208, 208, 208); letter-spacing: -0.1px; left: 304.1px; top: 699.6px;">#5</span>
<div class="b" style="left:304px;top:719px;width:387px;height:12px;background:#5d5d5d;border-radius:6.0px;overflow:hidden"><div style="width:8.13px;height:12px;background:#22c4ad;border-radius:6.0px"></div></div>
<span class="t" style="font-size: 13px; color: rgb(208, 208, 208); letter-spacing: -0.1px; left: 304.1px; top: 735.3px;">2.1%</span>
<span class="t" style="font-size: 13px; color: rgb(208, 208, 208); letter-spacing: -0.1px; left: 699.1px; top: 699.6px;">#6</span>
<div class="b" style="left:699px;top:719px;width:387px;height:12px;background:#5d5d5d;border-radius:6.0px;overflow:hidden"><div style="width:3.48px;height:12px;background:#22c4ad;border-radius:6.0px"></div></div>
<span class="t" style="font-size: 13px; color: rgb(208, 208, 208); letter-spacing: -0.1px; left: 699.1px; top: 735.3px;">0.9%</span>
<span class="t" style="font-size: 13px; color: rgb(208, 208, 208); letter-spacing: -0.1px; left: 1094.1px; top: 699.6px;">#7</span>
<div class="b" style="left:1094px;top:719px;width:387px;height:12px;background:#5d5d5d;border-radius:6.0px;overflow:hidden"><div style="width:0.00px;height:12px;background:#22c4ad;border-radius:6.0px"></div></div>
<span class="t" style="font-size: 13px; color: rgb(208, 208, 208); letter-spacing: -0.1px; left: 1094.1px; top: 735.3px;">0%</span>
<span class="t" style="font-size: 13px; color: rgb(208, 208, 208); letter-spacing: -0.1px; left: 1489.1px; top: 699.6px;">#8</span>
<div class="b" style="left:1489px;top:719px;width:387px;height:12px;background:#5d5d5d;border-radius:6.0px;overflow:hidden"><div style="width:5.42px;height:12px;background:#22c4ad;border-radius:6.0px"></div></div>
<span class="t" style="font-size: 13px; color: rgb(208, 208, 208); letter-spacing: -0.1px; left: 1489.1px; top: 735.3px;">1.4%</span>
<span class="t" style="font-size: 13px; color: rgb(208, 208, 208); letter-spacing: -0.1px; left: 304.1px; top: 762px;">#9</span>
<div class="b" style="left:304px;top:781.1px;width:387px;height:12px;background:#5d5d5d;border-radius:6.0px;overflow:hidden"><div style="width:5.03px;height:12px;background:#22c4ad;border-radius:6.0px"></div></div>
<span class="t" style="font-size: 13px; color: rgb(208, 208, 208); letter-spacing: -0.1px; left: 304.1px; top: 797px;">1.3%</span>
<span class="t" style="font-size: 13px; color: rgb(208, 208, 208); letter-spacing: -0.1px; left: 699.1px; top: 762px;">#10</span>
<div class="b" style="left:699px;top:781.1px;width:387px;height:12px;background:#5d5d5d;border-radius:6.0px;overflow:hidden"><div style="width:0.39px;height:12px;background:#22c4ad;border-radius:6.0px"></div></div>
<span class="t" style="font-size: 13px; color: rgb(208, 208, 208); letter-spacing: -0.1px; left: 699.1px; top: 797px;">0.1%</span>
<span class="t" style="font-size: 13px; color: rgb(208, 208, 208); letter-spacing: -0.1px; left: 1094.1px; top: 762px;">#11</span>
<div class="b" style="left:1094px;top:781.1px;width:387px;height:12px;background:#5d5d5d;border-radius:6.0px;overflow:hidden"><div style="width:2.32px;height:12px;background:#22c4ad;border-radius:6.0px"></div></div>
<span class="t" style="font-size: 13px; color: rgb(208, 208, 208); letter-spacing: -0.1px; left: 1094.1px; top: 797px;">0.6%</span>
<span class="t" style="font-size: 13px; color: rgb(208, 208, 208); letter-spacing: -0.1px; left: 1489.1px; top: 762px;">#12</span>
<div class="b" style="left:1489px;top:781.1px;width:387px;height:12px;background:#5d5d5d;border-radius:6.0px;overflow:hidden"><div style="width:4.26px;height:12px;background:#22c4ad;border-radius:6.0px"></div></div>
<span class="t" style="font-size: 13px; color: rgb(208, 208, 208); letter-spacing: -0.1px; left: 1489.1px; top: 797px;">1.1%</span>
<span class="t" style="font-size: 13px; color: rgb(208, 208, 208); letter-spacing: -0.1px; left: 304.1px; top: 823.9px;">#13</span>
<div class="b" style="left:304px;top:844.1px;width:387px;height:12px;background:#5d5d5d;border-radius:6.0px;overflow:hidden"><div style="width:0.39px;height:12px;background:#22c4ad;border-radius:6.0px"></div></div>
<span class="t" style="font-size: 13px; color: rgb(208, 208, 208); letter-spacing: -0.1px; left: 304.1px; top: 860px;">0.1%</span>
<span class="t" style="font-size: 13px; color: rgb(208, 208, 208); letter-spacing: -0.1px; left: 699.1px; top: 823.9px;">#14</span>
<div class="b" style="left:699px;top:844.1px;width:387px;height:12px;background:#5d5d5d;border-radius:6.0px;overflow:hidden"><div style="width:1.16px;height:12px;background:#22c4ad;border-radius:6.0px"></div></div>
<span class="t" style="font-size: 13px; color: rgb(208, 208, 208); letter-spacing: -0.1px; left: 699.1px; top: 860px;">0.3%</span>
<span class="t" style="font-size: 13px; color: rgb(208, 208, 208); letter-spacing: -0.1px; left: 1094.1px; top: 823.9px;">#15</span>
<div class="b" style="left:1094px;top:844.1px;width:387px;height:12px;background:#5d5d5d;border-radius:6.0px;overflow:hidden"><div style="width:3.87px;height:12px;background:#22c4ad;border-radius:6.0px"></div></div>
<span class="t" style="font-size: 13px; color: rgb(208, 208, 208); letter-spacing: -0.1px; left: 1094.1px; top: 860px;">1%</span>
<span class="t" style="font-size: 13px; color: rgb(208, 208, 208); letter-spacing: -0.1px; left: 1489.1px; top: 823.9px;">#16</span>
<div class="b" style="left:1489px;top:844.1px;width:387px;height:12px;background:#5d5d5d;border-radius:6.0px;overflow:hidden"><div style="width:1.16px;height:12px;background:#22c4ad;border-radius:6.0px"></div></div>
<span class="t" style="font-size: 13px; color: rgb(208, 208, 208); letter-spacing: -0.1px; left: 1489.1px; top: 860px;">0.3%</span>
<div class="card" style="left:284px;top:913px;width:1612px;height:456px"></div>
<svg class="b" style="left:304px;top:937px;" width="18" height="18" viewBox="0 0 16 16" fill="#d8d5ec"><path fill-rule="evenodd" clip-rule="evenodd" d="M4.5 5a.5.5 0 1 0 0-1 .5.5 0 0 0 0 1M3 4.5a.5.5 0 1 1-1 0 .5.5 0 0 1 1 0"></path><path fill-rule="evenodd" clip-rule="evenodd" d="M0 4a2 2 0 0 1 2-2h12a2 2 0 0 1 2 2v1a2 2 0 0 1-2 2H8.5v3a1.5 1.5 0 0 1 1.5 1.5h5.5a.5.5 0 0 1 0 1H10A1.5 1.5 0 0 1 8.500 14h-1A1.5 1.5 0 0 1 6 12.500H.500a.5.5 0 0 1 0-1H6A1.5 1.5 0 0 1 7.500 10V7H2a2 2 0 0 1-2-2zm1 0v1a1 1 0 0 0 1 1h12a1 1 0 0 0 1-1V4a1 1 0 0 0-1-1H2a1 1 0 0 0-1 1m6 7.500v1a.5.5 0 0 0 .5.5h1a.5.5 0 0 0 .5-.5v-1a.5.5 0 0 0-.5-.5h-1a.5.5 0 0 0-.5.5"></path></svg>
<span class="t" style="font-size: 18px; color: rgb(216, 213, 236); -webkit-text-stroke: 0.2px rgb(216, 213, 236); letter-spacing: 0.66px; left: 329.25px; top: 937.75px;">Banco de dados de sources</span>
<div class="b" style="left:304px;top:973px;width:1572px;height:54px;background:#333333;border-radius:0px;"></div>
<span class="t" style="font-size: 13px; color: rgb(216, 213, 236); -webkit-text-stroke: 0.3px rgb(216, 213, 236); letter-spacing: -0.079px; left: 324.5px; top: 992px;">ORIGEM</span>
<span class="t" style="font-size: 13px; color: rgb(216, 213, 236); -webkit-text-stroke: 0.3px rgb(216, 213, 236); letter-spacing: 0.264px; left: 688.5px; top: 992px;">STATUS</span>
<span class="t" style="font-size: 13px; color: rgb(216, 213, 236); -webkit-text-stroke: 0.3px rgb(216, 213, 236); letter-spacing: 0.596px; left: 823px; top: 992px;">TAMANHO</span>
<span class="t" style="font-size: 13px; color: rgb(216, 213, 236); -webkit-text-stroke: 0.3px rgb(216, 213, 236); letter-spacing: -0.029px; left: 972.5px; top: 992px;">ARQUIVOS</span>
<span class="t" style="font-size: 13px; color: rgb(216, 213, 236); -webkit-text-stroke: 0.3px rgb(216, 213, 236); letter-spacing: -0.096px; left: 1122.25px; top: 992px;">PRIMEIRO</span>
<span class="t" style="font-size: 13px; color: rgb(216, 213, 236); -webkit-text-stroke: 0.3px rgb(216, 213, 236); letter-spacing: 0.443px; left: 1389px; top: 992px;">ÚLTIMO</span>
<span class="t" style="font-size: 13px; color: rgb(216, 213, 236); -webkit-text-stroke: 0.3px rgb(216, 213, 236); letter-spacing: 0.226px; left: 1655.25px; top: 992px;">LIMITES</span>
<div class="b" style="left:304px;top:1085.0px;width:1572px;height:1px;background:#565656;border-radius:0px;"></div>
<span class="t" style="font-size: 15px; color: rgb(208, 208, 208); -webkit-text-stroke: 0.55px rgb(208, 208, 208); letter-spacing: -0.167px; left: 323.5px; top: 1038.75px;">BORDA-RS</span>
<span class="t" style="font-size: 13px; color: rgb(208, 208, 208); letter-spacing: 0.23px; left: 323.5px; top: 1059.5px;">Fred. Westphalen/RS</span>
<div class="b" style="left:688.25px;top:1044px;width:47.75px;height:24px;background:#4a6b3a;border-radius:4px;"></div>
<span class="t" style="font-size: 13px; color: rgb(255, 255, 255); font-weight: 700; letter-spacing: -0.34px; left: 696.6px; top: 1049px;">Ativo</span>
<span class="t" style="font-size: 15px; color: rgb(208, 208, 208); letter-spacing: -0.255px; left: 822px; top: 1047.2px;">18.3 GB</span>
<span class="t" style="font-size: 15px; color: rgb(208, 208, 208); letter-spacing: 0.408px; left: 971.5px; top: 1047.2px;">19452</span>
<span class="t" style="font-size: 15px; color: rgb(208, 208, 208); letter-spacing: 0.725px; left: 1123.75px; top: 1047.2px;">2026-02-28 21:49:00</span>
<span class="t" style="font-size: 15px; color: rgb(208, 208, 208); letter-spacing: 0.753px; left: 1390px; top: 1047.2px;">2026-03-14 09:55:00</span>
<span class="t" style="font-size: 15px; color: rgb(208, 208, 208); letter-spacing: 0.3px; left: 1656.75px; top: 1047.2px;">30 GB / 14 d / 95%</span>
<div class="b" style="left:304px;top:1142.75px;width:1572px;height:1px;background:#565656;border-radius:0px;"></div>
<span class="t" style="font-size: 15px; color: rgb(208, 208, 208); -webkit-text-stroke: 0.55px rgb(208, 208, 208); letter-spacing: -0.127px; left: 323.5px; top: 1097.15px;">PPPOES-RS</span>
<span class="t" style="font-size: 13px; color: rgb(208, 208, 208); letter-spacing: -0.319px; left: 324.5px; top: 1117.9px;">CONCENTRADOR PPPOE RS</span>
<div class="b" style="left:688.25px;top:1102.4px;width:47.75px;height:24px;background:#4a6b3a;border-radius:4px;"></div>
<span class="t" style="font-size: 13px; color: rgb(255, 255, 255); font-weight: 700; letter-spacing: -0.34px; left: 696.6px; top: 1107.4px;">Ativo</span>
<span class="t" style="font-size: 15px; color: rgb(208, 208, 208); letter-spacing: -0.255px; left: 822px; top: 1105.6px;">10.3 GB</span>
<span class="t" style="font-size: 15px; color: rgb(208, 208, 208); letter-spacing: 0.533px; left: 971.5px; top: 1105.6px;">19860</span>
<span class="t" style="font-size: 15px; color: rgb(208, 208, 208); letter-spacing: 0.517px; left: 1123.75px; top: 1105.6px;">2026-02-28 15:01:00</span>
<span class="t" style="font-size: 15px; color: rgb(208, 208, 208); letter-spacing: 0.753px; left: 1390px; top: 1105.6px;">2026-03-14 09:55:00</span>
<span class="t" style="font-size: 15px; color: rgb(208, 208, 208); letter-spacing: 0.335px; left: 1656.75px; top: 1105.6px;">30 GB / 15 d / 90%</span>
<div class="b" style="left:304px;top:1202.0px;width:1572px;height:1px;background:#565656;border-radius:0px;"></div>
<span class="t" style="font-size: 15px; color: rgb(208, 208, 208); -webkit-text-stroke: 0.55px rgb(208, 208, 208); letter-spacing: 0.023px; left: 323.5px; top: 1155.55px;">BORDA-SC</span>
<span class="t" style="font-size: 13px; color: rgb(208, 208, 208); letter-spacing: 0.387px; left: 323.5px; top: 1176.3px;">Palmitos/SC</span>
<div class="b" style="left:688.25px;top:1160.8px;width:47.75px;height:24px;background:#4a6b3a;border-radius:4px;"></div>
<span class="t" style="font-size: 13px; color: rgb(255, 255, 255); font-weight: 700; letter-spacing: -0.34px; left: 696.6px; top: 1165.8px;">Ativo</span>
<span class="t" style="font-size: 15px; color: rgb(208, 208, 208); letter-spacing: -0.976px; left: 822px; top: 1164px;">1 GB</span>
<span class="t" style="font-size: 15px; color: rgb(208, 208, 208); letter-spacing: 0.47px; left: 971.5px; top: 1164px;">18384</span>
<span class="t" style="font-size: 15px; color: rgb(208, 208, 208); letter-spacing: 0.489px; left: 1123.75px; top: 1164px;">2026-03-01 15:37:00</span>
<span class="t" style="font-size: 15px; color: rgb(208, 208, 208); letter-spacing: 0.753px; left: 1390px; top: 1164px;">2026-03-14 09:55:00</span>
<span class="t" style="font-size: 15px; color: rgb(208, 208, 208); letter-spacing: 0.347px; left: 1656.75px; top: 1164px;">30 GB / 14 d / 90%</span>
<div class="b" style="left:304px;top:1245.75px;width:1572px;height:1px;background:#565656;border-radius:0px;"></div>
<span class="t" style="font-size: 15px; color: rgb(208, 208, 208); -webkit-text-stroke: 0.55px rgb(208, 208, 208); letter-spacing: 0.116px; left: 323.5px; top: 1215.8px;">PPPOES-RS-NO-PROXY</span>
<div class="b" style="left:688.25px;top:1212.2px;width:47.75px;height:24px;background:#4a6b3a;border-radius:4px;"></div>
<span class="t" style="font-size: 13px; color: rgb(255, 255, 255); font-weight: 700; letter-spacing: -0.34px; left: 696.6px; top: 1217.2px;">Ativo</span>
<span class="t" style="font-size: 15px; color: rgb(208, 208, 208); letter-spacing: -0.187px; left: 823px; top: 1215.8px;">9.7 GB</span>
<span class="t" style="font-size: 15px; color: rgb(208, 208, 208); letter-spacing: 0.408px; left: 971.5px; top: 1215.8px;">19284</span>
<span class="t" style="font-size: 15px; color: rgb(208, 208, 208); letter-spacing: 0.712px; left: 1123.75px; top: 1215.8px;">2026-03-01 00:37:00</span>
<span class="t" style="font-size: 15px; color: rgb(208, 208, 208); letter-spacing: 0.753px; left: 1390px; top: 1215.8px;">2026-03-14 09:55:00</span>
<span class="t" style="font-size: 15px; color: rgb(208, 208, 208); letter-spacing: 0.347px; left: 1656.75px; top: 1215.8px;">30 GB / 14 d / 90%</span>
<div class="b" style="left:304px;top:1304.0px;width:1572px;height:1px;background:#565656;border-radius:0px;"></div>
<span class="t" style="font-size: 15px; color: rgb(208, 208, 208); -webkit-text-stroke: 0.55px rgb(208, 208, 208); letter-spacing: -0.18px; left: 323.5px; top: 1257.75px;">ROUTEROS-TESTE</span>
<span class="t" style="font-size: 13px; color: rgb(208, 208, 208); letter-spacing: 0.284px; left: 324.5px; top: 1278.5px;">Teste Proxy</span>
<div class="b" style="left:688.25px;top:1263.0px;width:57.75px;height:24px;background:#6e4545;border-radius:4px;"></div>
<span class="t" style="font-size: 13px; color: rgb(255, 255, 255); font-weight: 700; letter-spacing: -0.126px; left: 696.6px; top: 1268px;">Inativo</span>
<span class="t" style="font-size: 15px; color: rgb(208, 208, 208); letter-spacing: -0.059px; left: 823px; top: 1266.2px;">0 GB</span>
<span class="t" style="font-size: 15px; color: rgb(208, 208, 208); left: 972.5px; top: 1266.2px;">3</span>
<span class="t" style="font-size: 15px; color: rgb(208, 208, 208); letter-spacing: 0.57px; left: 1123.75px; top: 1266.2px;">2026-02-27 01:13:00</span>
<span class="t" style="font-size: 15px; color: rgb(208, 208, 208); letter-spacing: 0.52px; left: 1390px; top: 1266.2px;">2026-02-27 01:13:00</span>
<span class="t" style="font-size: 15px; color: rgb(208, 208, 208); letter-spacing: 0.347px; left: 1656.75px; top: 1266.2px;">30 GB / 14 d / 90%</span>
<div class="b" style="left:304px;top:1347.75px;width:1572px;height:1px;background:#565656;border-radius:0px;"></div>
<span class="t" style="font-size: 15px; color: rgb(208, 208, 208); -webkit-text-stroke: 0.55px rgb(208, 208, 208); letter-spacing: 0.041px; left: 323.5px; top: 1318px;">ROUTEROS-TESTE-NO-PROXY</span>
<div class="b" style="left:688.25px;top:1314.4px;width:57.75px;height:24px;background:#6e4545;border-radius:4px;"></div>
<span class="t" style="font-size: 13px; color: rgb(255, 255, 255); font-weight: 700; letter-spacing: -0.126px; left: 696.6px; top: 1319.4px;">Inativo</span>
<span class="t" style="font-size: 15px; color: rgb(208, 208, 208); letter-spacing: -0.059px; left: 823px; top: 1318px;">0 GB</span>
<span class="t" style="font-size: 15px; color: rgb(208, 208, 208); left: 972.5px; top: 1318px;">3</span>
<span class="t" style="font-size: 15px; color: rgb(208, 208, 208); letter-spacing: 0.57px; left: 1123.75px; top: 1318px;">2026-02-27 01:13:00</span>
<span class="t" style="font-size: 15px; color: rgb(208, 208, 208); letter-spacing: 0.52px; left: 1390px; top: 1318px;">2026-02-27 01:13:00</span>
<span class="t" style="font-size: 15px; color: rgb(208, 208, 208); letter-spacing: 0.347px; left: 1656.75px; top: 1318px;">30 GB / 14 d / 90%</span>
<div class="card" style="left:284px;top:1385px;width:1612px;height:186.7px"></div>
<svg class="b" style="left:304px;top:1410px;" width="18" height="18" viewBox="0 0 16 16" fill="#d8d5ec"><path fill-rule="evenodd" clip-rule="evenodd" d="M14 10a1 1 0 0 1 1 1v1a1 1 0 0 1-1 1H2a1 1 0 0 1-1-1v-1a1 1 0 0 1 1-1zM2 9a2 2 0 0 0-2 2v1a2 2 0 0 0 2 2h12a2 2 0 0 0 2-2v-1a2 2 0 0 0-2-2z"></path><path fill-rule="evenodd" clip-rule="evenodd" d="M5 11.5a.5.5 0 1 1-1 0 .5.5 0 0 1 1 0m-2 0a.5.5 0 1 1-1 0 .5.5 0 0 1 1 0M14 3a1 1 0 0 1 1 1v1a1 1 0 0 1-1 1H2a1 1 0 0 1-1-1V4a1 1 0 0 1 1-1zM2 2a2 2 0 0 0-2 2v1a2 2 0 0 0 2 2h12a2 2 0 0 0 2-2V4a2 2 0 0 0-2-2z"></path><path fill-rule="evenodd" clip-rule="evenodd" d="M5 4.5a.5.5 0 1 1-1 0 .5.5 0 0 1 1 0m-2 0a.5.5 0 1 1-1 0 .5.5 0 0 1 1 0"></path></svg>
<span class="t" style="font-size: 18px; color: rgb(216, 213, 236); -webkit-text-stroke: 0.2px rgb(216, 213, 236); letter-spacing: 0.615px; left: 329.5px; top: 1410.25px;">Uso de Disco</span>
<div class="b" style="left:1784px;top:1405px;width:92px;height:28px;border:1px solid #22c4ad;border-radius:3px"></div>
<span class="t" style="font-size: 11.5px; color: rgb(34, 196, 173); -webkit-text-stroke: 0.3px rgb(34, 196, 173); letter-spacing: 0.557px; left: 1795.4px; top: 1414.1px;">Testar Disco</span>
<div class="b" style="left:304px;top:1445px;width:1572px;height:54.75px;background:#333333;border-radius:0px;"></div>
<span class="t" style="font-size: 13px; color: rgb(216, 213, 236); -webkit-text-stroke: 0.3px rgb(216, 213, 236); letter-spacing: 0.184px; left: 323.7px; top: 1464.9px;">DISPOSITIVO</span>
<span class="t" style="font-size: 13px; color: rgb(216, 213, 236); -webkit-text-stroke: 0.3px rgb(216, 213, 236); letter-spacing: 0.663px; left: 697.2px; top: 1464.9px;">MONTAGEM</span>
<span class="t" style="font-size: 13px; color: rgb(216, 213, 236); -webkit-text-stroke: 0.3px rgb(216, 213, 236); letter-spacing: 0.47px; left: 1053.7px; top: 1464.9px;">USADO</span>
<span class="t" style="font-size: 13px; color: rgb(216, 213, 236); -webkit-text-stroke: 0.3px rgb(216, 213, 236); letter-spacing: -0.05px; left: 1345.7px; top: 1464.9px;">LIVRE</span>
<span class="t" style="font-size: 13px; color: rgb(216, 213, 236); -webkit-text-stroke: 0.3px rgb(216, 213, 236); letter-spacing: 0.17px; left: 1654.7px; top: 1464.9px;">USO</span>
<span class="t" style="font-size: 15px; color: rgb(208, 208, 208); letter-spacing: 0.312px; left: 324.7px; top: 1517px;">/dev/sda1</span>
<span class="t" style="font-size: 15px; color: rgb(208, 208, 208); left: 698.2px; top: 1517px;">/</span>
<span class="t" style="font-size: 15px; color: rgb(208, 208, 208); letter-spacing: 0.312px; left: 1054.7px; top: 1517px;">43.8 GB</span>
<span class="t" style="font-size: 15px; color: rgb(208, 208, 208); letter-spacing: -0.025px; left: 1345.7px; top: 1517px;">132.5 GB</span>
<div class="b" style="left:1655px;top:1508.9px;width:201px;height:12px;background:#5d5d5d;border-radius:6.0px;overflow:hidden"><div style="width:50.05px;height:12px;background:#fdb528;border-radius:6.0px"></div></div>
<span class="t" style="font-size: 13px; color: rgb(208, 208, 208); letter-spacing: 0.325px; left: 1655.7px; top: 1524.9px;">24.9%</span>
<div class="b" style="left:304px;top:1550.8px;width:1572px;height:1px;background:#565656;border-radius:0px;"></div>
<span class="t" style="font-size: 15px; color: rgb(208, 208, 208); letter-spacing: 0.647px; left: 284.8px; top: 1614.3px;">© Copyright 2026 by</span>
<span class="t" style="font-size: 15px; color: rgb(34, 196, 173); letter-spacing: -0.045px; left: 437.9px; top: 1614.3px;">RR Flow</span>
<span class="t" style="font-size: 15px; color: rgb(208, 208, 208); left: 501.2px; top: 1614.3px;">|</span>
<span class="t" style="font-size: 15px; color: rgb(208, 208, 208); letter-spacing: 0.502px; left: 509.1px; top: 1614.3px;">Desenvolvido e Mantido por</span>
<span class="t" style="font-size: 15px; color: rgb(34, 196, 173); letter-spacing: 0.644px; left: 711.5px; top: 1614.3px;">Remontti</span>
<span class="t" style="font-size: 15px; color: rgb(34, 196, 173); letter-spacing: 0.434px; left: 1762.2px; top: 1614.3px;">Portal do Cliente</span>
<div class="b" style="left:1882px;top:180px;width:38px;height:38px;background:#22c4ad;border-radius:19px 0 0 19px;box-shadow:0 2px 6px rgba(34,196,173,.35)"></div>
<svg class="b" style="left:1891.0px;top:189.0px" width="20" height="20" viewBox="0 0 20 20" fill="none" stroke="#ffffff" stroke-width="1.45" stroke-linejoin="round"><path d="M8.03 4.87 L8.48 2.86 L11.52 2.86 L11.97 4.87 L13.46 5.73 L15.42 5.12 L16.94 7.74 L15.43 9.14 L15.43 10.86 L16.94 12.26 L15.42 14.88 L13.46 14.27 L11.97 15.13 L11.52 17.14 L8.48 17.14 L8.03 15.13 L6.54 14.27 L4.58 14.88 L3.06 12.26 L4.57 10.86 L4.57 9.14 L3.06 7.74 L4.58 5.12 L6.54 5.73Z"></path><circle cx="10" cy="10" r="2.45"></circle></svg>
<div class="b" style="left:1870px;top:856px;width:50px;height:30px;overflow:hidden"><div style="position:absolute;left:12px;top:-20px;width:38px;height:38px;background:#22c4ad;border-radius:19px 0 0 19px;box-shadow:0 2px 6px rgba(34,196,173,.35)"></div><svg class="b" style="left:21.0px;top:-11.0px" width="20" height="20" viewBox="0 0 20 20" fill="none" stroke="#ffffff" stroke-width="1.45" stroke-linejoin="round"><path d="M8.03 4.87 L8.48 2.86 L11.52 2.86 L11.97 4.87 L13.46 5.73 L15.42 5.12 L16.94 7.74 L15.43 9.14 L15.43 10.86 L16.94 12.26 L15.42 14.88 L13.46 14.27 L11.97 15.13 L11.52 17.14 L8.48 17.14 L8.03 15.13 L6.54 14.27 L4.58 14.88 L3.06 12.26 L4.57 10.86 L4.57 9.14 L3.06 7.74 L4.58 5.12 L6.54 5.73Z"></path><circle cx="10" cy="10" r="2.45"></circle></svg></div>
</div></body></html>
